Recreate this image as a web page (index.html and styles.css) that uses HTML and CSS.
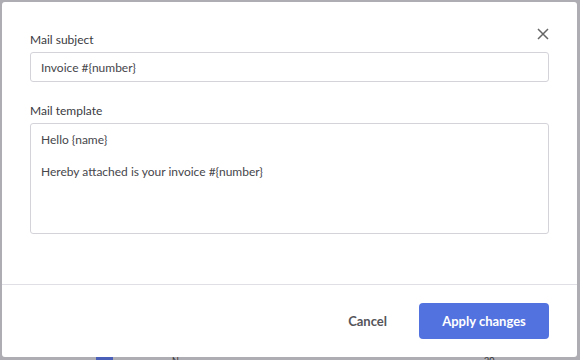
FILE: index.html
```html
<!DOCTYPE html>
<html lang="en">
<head>
    <meta charset="UTF-8">
    <meta name="viewport" content="width=device-width, initial-scale=1.0">
    <title>Mail settings</title>
    <link rel="stylesheet" href="styles.css">
</head>
<body>
    <div class="backdrop">
        <div class="modal">
            <button class="close-btn" aria-label="Close">
                <svg width="12" height="12" viewBox="0 0 12 12">
                    <path d="M1 1 L11 11 M11 1 L1 11" stroke="#666" stroke-width="1.5" fill="none"/>
                </svg>
            </button>
            <div class="modal-body">
                <div class="form-group">
                    <label class="label">Mail subject</label>
                    <input type="text" class="input" value="Invoice #{number}">
                </div>
                <div class="form-group">
                    <label class="label">Mail template</label>
                    <textarea class="textarea">Hello {name}

Hereby attached is your invoice #{number}</textarea>
                </div>
            </div>
            <div class="modal-footer">
                <button class="btn btn-cancel">Cancel</button>
                <button class="btn btn-primary">Apply changes</button>
            </div>
        </div>
        <div class="peek">
            <span class="peek-check"></span>
            <span class="peek-text">N</span>
            <span class="peek-num">20</span>
        </div>
    </div>
</body>
</html>
```

FILE: styles.css
```css
body {
    margin: 0;
    font-family: Lato, "Noto Sans", sans-serif;
    background: #afadb4;
}
.backdrop {
    width: 580px;
    height: 360px;
    padding: 2px 0 0 2px;
    box-sizing: border-box;
    position: relative;
    overflow: hidden;
}
.modal {
    position: relative;
    width: 575px;
    height: 355px;
    background: #fff;
    border-radius: 3px;
    display: flex;
    flex-direction: column;
    box-sizing: border-box;
}
.close-btn {
    position: absolute;
    top: 24px;
    right: 26px;
    width: 16px;
    height: 16px;
    padding: 2px;
    border: none;
    background: none;
    cursor: pointer;
}
.modal-body {
    padding: 29px 28px 0 28px;
    height: 283px;
    box-sizing: border-box;
    border-bottom: 1px solid #e0dfe5;
}
.form-group {
    margin-bottom: 20px;
}
.label {
    display: block;
    font-size: 12px;
    line-height: 18px;
    color: #3a3a3f;
    margin-bottom: 3px;
}
.input, .textarea {
    display: block;
    width: 100%;
    box-sizing: border-box;
    border: 1px solid #d4d3da;
    border-radius: 3px;
    font-family: inherit;
    font-size: 12px;
    color: #46464b;
    padding: 0 10px;
    outline: none;
}
.input {
    height: 30px;
}
.textarea {
    height: 111px;
    padding: 8px 10px;
    line-height: 16px;
    resize: none;
}
.modal-footer {
    flex: 1;
    display: flex;
    align-items: center;
    justify-content: flex-end;
    padding-right: 28px;
    gap: 32px;
}
.btn {
    font-family: inherit;
    font-size: 13px;
    font-weight: bold;
    border: none;
    border-radius: 4px;
    cursor: pointer;
}
.btn-cancel {
    background: none;
    color: #55545a;
    padding: 0;
}
.btn-primary {
    background: #5272df;
    color: #fff;
    width: 130px;
    height: 36px;
}
.peek {
    position: absolute;
    left: 0;
    top: 357px;
    width: 580px;
    height: 3px;
}
.peek-check {
    position: absolute;
    left: 96px;
    top: 0;
    width: 17px;
    height: 3px;
    background: #4a5fb8;
}
.peek-text {
    position: absolute;
    left: 172px;
    top: -2px;
    font-size: 9px;
    color: #333;
}
.peek-num {
    position: absolute;
    left: 484px;
    top: -2px;
    font-size: 9px;
    color: #333;
}
```
